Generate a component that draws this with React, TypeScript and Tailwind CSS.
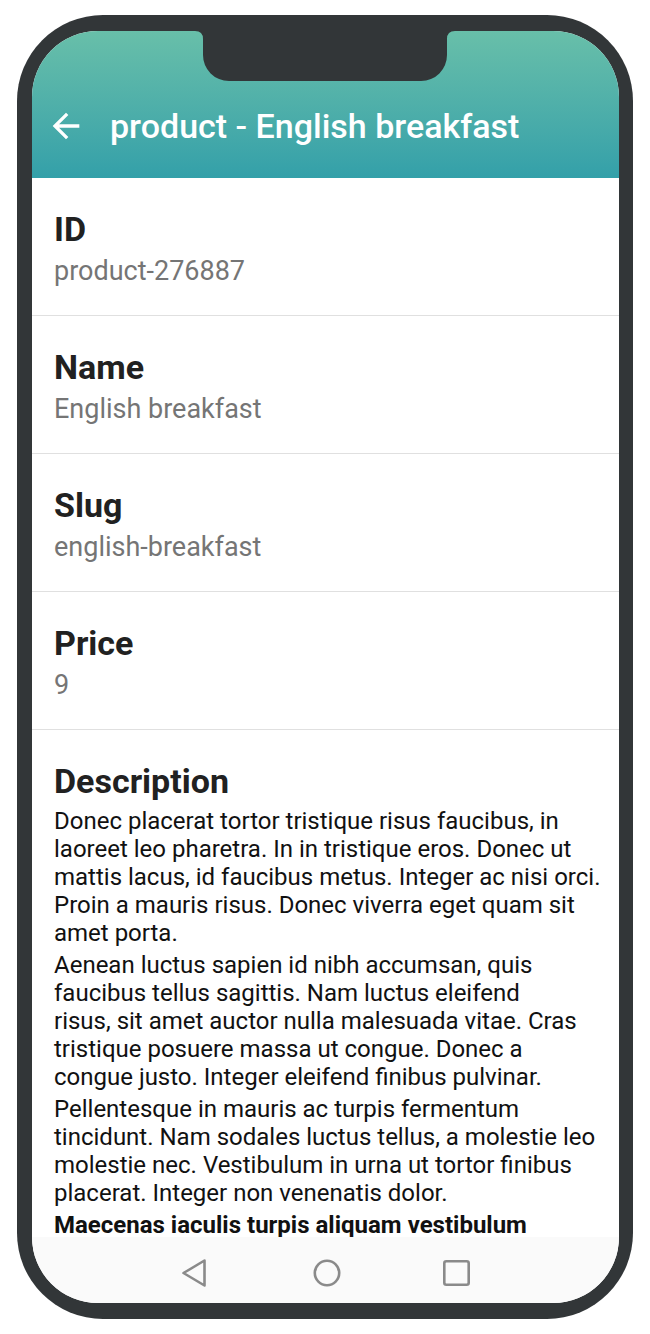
import React from "react";

const fields = [
  { label: "ID", value: "product-276887" },
  { label: "Name", value: "English breakfast" },
  { label: "Slug", value: "english-breakfast" },
  { label: "Price", value: "9" },
];

const paragraphs = [
  [
    "Donec placerat tortor tristique risus faucibus, in",
    "laoreet leo pharetra. In in tristique eros. Donec ut",
    "mattis lacus, id faucibus metus. Integer ac nisi orci.",
    "Proin a mauris risus. Donec viverra eget quam sit",
    "amet porta.",
  ],
  [
    "Aenean luctus sapien id nibh accumsan, quis",
    "faucibus tellus sagittis. Nam luctus eleifend",
    "risus, sit amet auctor nulla malesuada vitae. Cras",
    "tristique posuere massa ut congue. Donec a",
    "congue justo. Integer eleifend finibus pulvinar.",
  ],
  [
    "Pellentesque in mauris ac turpis fermentum",
    "tincidunt. Nam sodales luctus tellus, a molestie leo",
    "molestie nec. Vestibulum in urna ut tortor finibus",
    "placerat. Integer non venenatis dolor.",
  ],
];

export default function App() {
  return (
    <div
      className="w-[650px] h-[1334px] bg-white pt-[15px] overflow-hidden"
      style={{ fontFamily: "Roboto, 'Noto Sans', sans-serif" }}
    >
      <div className="ml-[17px] w-[616px] h-[1304px] rounded-[86px] bg-[#323638] pt-[16px] pb-[16px] pl-[15px] pr-[14px]">
        <div className="relative h-[1272px] w-full rounded-[66px] overflow-hidden bg-white flex flex-col">
          {/* notch */}
          <svg
            className="absolute top-0 left-[163px]"
            width="260"
            height="50"
            viewBox="0 0 260 50"
          >
            <path
              d="M0,0 Q8,0 8,8 L8,24 A26,26 0 0 0 34,50 L226,50 A26,26 0 0 0 252,24 L252,8 Q252,0 260,0 Z"
              fill="#323638"
            />
          </svg>

          {/* header */}
          <div className="shrink-0 h-[147px] bg-gradient-to-b from-[#68bfa9] to-[#33a0a9] pt-[49px]">
            <div className="h-[91px] flex items-center pl-[14px]">
              <svg width="40" height="40" viewBox="0 0 24 24" fill="#ffffff">
                <path d="M20 11H7.83l5.59-5.59L12 4l-8 8 8 8 1.41-1.41L7.83 13H20v-2z" />
              </svg>
              <div className="ml-[24px] text-white text-[34px] leading-[40px] font-medium whitespace-nowrap">
                product - English breakfast
              </div>
            </div>
          </div>

          {/* content */}
          <div className="flex-1 overflow-hidden">
            {fields.map((f) => (
              <div
                key={f.label}
                className="border-b border-[#e0e0e0] pl-[22px] pt-[32px] pb-[28px]"
              >
                <div className="text-[34px] leading-[39px] font-bold text-[#212121]">
                  {f.label}
                </div>
                <div className="mt-[6px] text-[27px] leading-[32px] text-[#757575]">
                  {f.value}
                </div>
              </div>
            ))}
            <div className="pl-[22px] pt-[32px]">
              <div className="text-[34px] leading-[39px] font-bold text-[#212121]">
                Description
              </div>
              <div className="mt-[6px] flex flex-col gap-[4px] text-[24px] leading-[28px] text-[#111111]">
                {paragraphs.map((p, i) => (
                  <p key={i} className="whitespace-nowrap">
                    {p.map((line, j) => (
                      <span key={j} className="block">
                        {line}
                      </span>
                    ))}
                  </p>
                ))}
                <p className="whitespace-nowrap font-bold">
                  Maecenas iaculis turpis aliquam vestibulum
                </p>
              </div>
            </div>
          </div>

          {/* nav bar */}
          <div className="shrink-0 h-[66px] bg-[#fafafa] flex items-center justify-center pt-[6px]">
            <svg width="26" height="30" viewBox="0 0 26 30">
              <path
                d="M23.5 2.5 L2.5 15 L23.5 27.5 Z"
                fill="none"
                stroke="#8a8a8a"
                strokeWidth="2.6"
                strokeLinejoin="round"
              />
            </svg>
            <svg className="ml-[106px]" width="28" height="28" viewBox="0 0 28 28">
              <circle cx="14" cy="14" r="12.2" fill="none" stroke="#8a8a8a" strokeWidth="2.6" />
            </svg>
            <svg className="ml-[102px]" width="27" height="26" viewBox="0 0 27 26">
              <rect
                x="1.3"
                y="1.3"
                width="24.4"
                height="23.4"
                rx="2"
                fill="none"
                stroke="#8a8a8a"
                strokeWidth="2.6"
              />
            </svg>
          </div>
        </div>
      </div>
    </div>
  );
}
